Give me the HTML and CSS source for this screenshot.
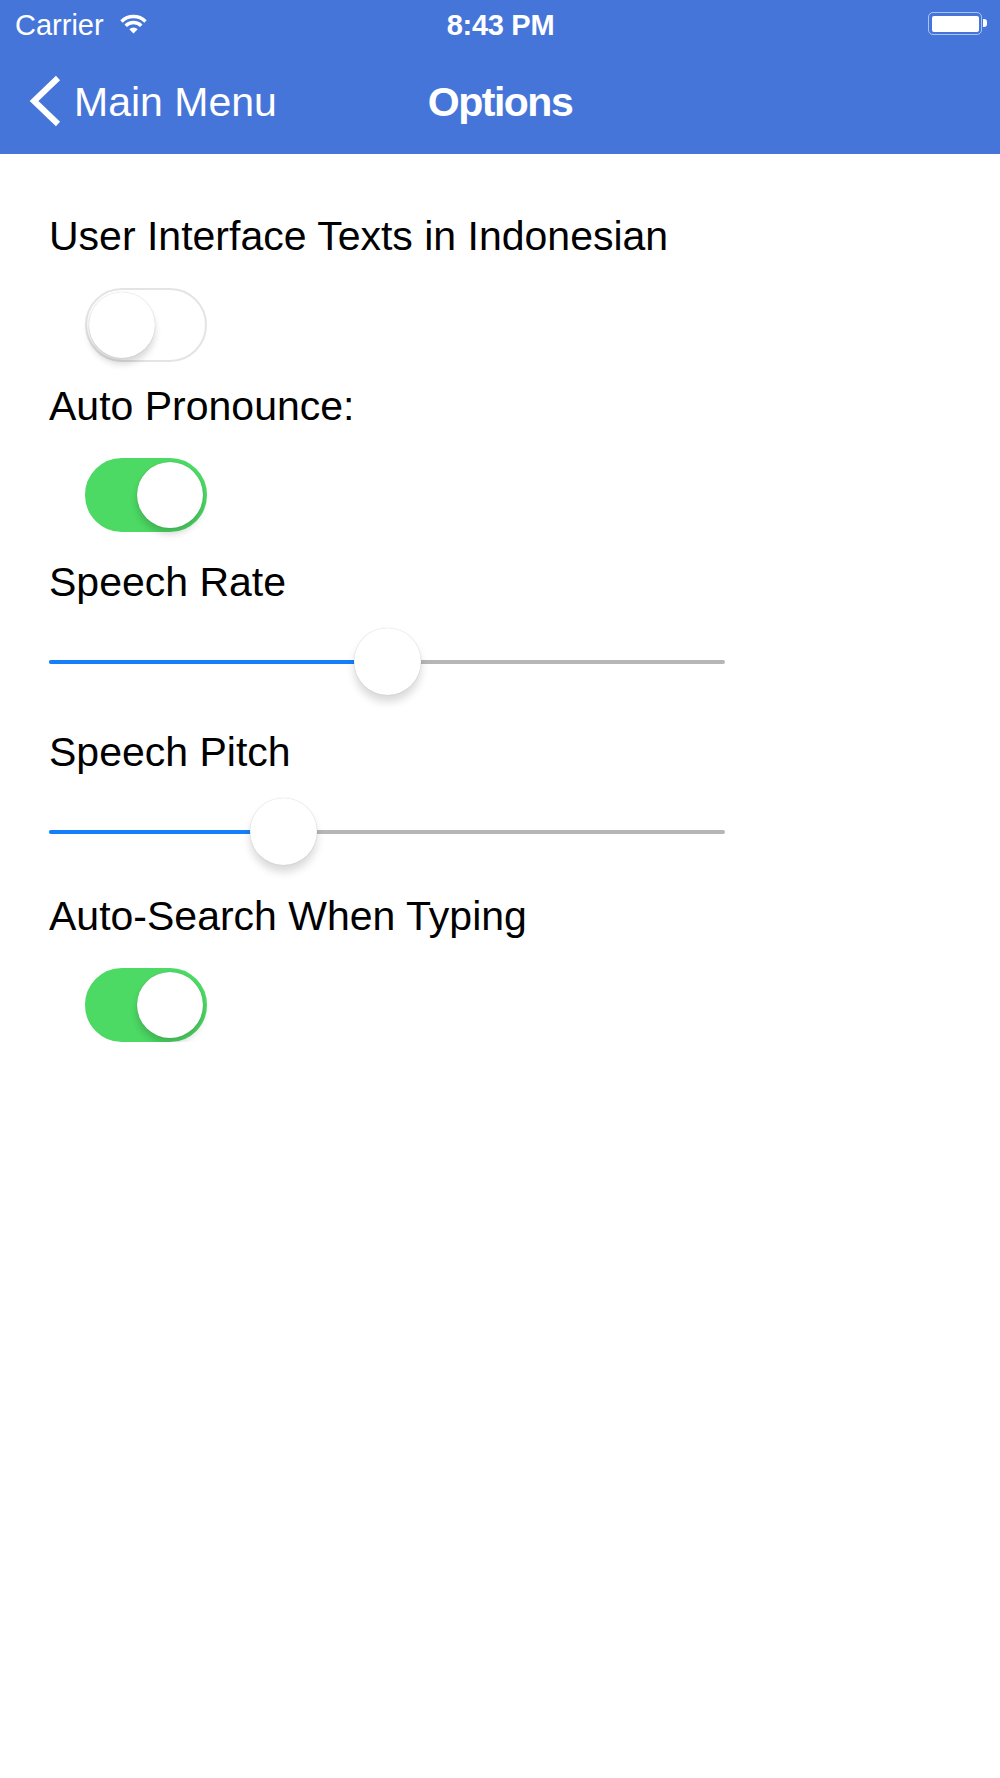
FILE: index.html
```html
<!DOCTYPE html>
<html lang="en">
<head>
    <meta charset="UTF-8">
    <meta name="viewport" content="width=device-width, initial-scale=1.0">
    <title>Options</title>
    <link rel="stylesheet" href="styles.css">
</head>
<body>
    <header class="topbar">
        <div class="status">
            <div class="status-left">
                <span>Carrier</span>
                <svg class="wifi" width="29" height="21" viewBox="0 0 29 21">
                    <path d="M2.5 8.5 A17 17 0 0 1 26.5 8.5" fill="none" stroke="#fff" stroke-width="3.4"/>
                    <path d="M6.7 12.7 A11 11 0 0 1 22.3 12.7" fill="none" stroke="#fff" stroke-width="3.4"/>
                    <path d="M14.5 20.5 L10.3 16.3 A6 6 0 0 1 18.7 16.3 Z" fill="#fff"/>
                </svg>
            </div>
            <div class="time">8:43 PM</div>
            <div class="status-right">
                <div class="battery"><div class="battery-fill"></div></div>
            </div>
        </div>
        <nav class="navbar">
            <div class="back">
                <svg class="chevron" width="34" height="52" viewBox="0 0 34 52">
                    <polyline points="30,3 6,26 30,49" fill="none" stroke="#fff" stroke-width="6"/>
                </svg>
                <span>Main Menu</span>
            </div>
            <div class="title">Options</div>
            <div></div>
        </nav>
    </header>

    <main class="options">
        <div class="label">User Interface Texts in Indonesian</div>
        <div class="switch"><div class="knob"></div></div>

        <div class="label label-after-switch">Auto Pronounce:</div>
        <div class="switch on"><div class="knob"></div></div>

        <div class="label label-before-slider">Speech Rate</div>
        <div class="slider">
            <div class="track"><div class="fill" style="width: 338px"></div></div>
            <div class="thumb" style="left: 305px"></div>
        </div>

        <div class="label label-after-slider">Speech Pitch</div>
        <div class="slider">
            <div class="track"><div class="fill" style="width: 235px"></div></div>
            <div class="thumb" style="left: 201px"></div>
        </div>

        <div class="label label-last">Auto-Search When Typing</div>
        <div class="switch on"><div class="knob"></div></div>
    </main>
</body>
</html>
```

FILE: styles.css
```css
body {
    margin: 0;
    background: #fff;
    font-family: "Liberation Sans", Arial, sans-serif;
    color: #000;
}

.topbar {
    background-color: #4675da;
    color: #fff;
}

.status {
    display: grid;
    grid-template-columns: 1fr auto 1fr;
    height: 48px;
    box-sizing: border-box;
    padding: 3px 14px 0 15px;
    font-size: 29px;
    line-height: 45px;
}

.status-left {
    display: flex;
    align-items: center;
}

.wifi {
    margin-left: 15px;
    margin-top: -5px;
}

.time {
    font-weight: bold;
    letter-spacing: -0.3px;
}

.status-right {
    display: flex;
    justify-content: flex-end;
    align-items: center;
}

.battery {
    position: relative;
    width: 54px;
    height: 23px;
    box-sizing: border-box;
    margin-top: -4px;
    margin-right: 4px;
    padding: 2.5px;
    border: 1.5px solid rgba(255, 255, 255, 0.55);
    border-radius: 5px;
}

.battery::after {
    content: "";
    position: absolute;
    right: -6px;
    top: 6px;
    width: 4px;
    height: 8px;
    background: #fff;
    border-radius: 0 3px 3px 0;
}

.battery-fill {
    height: 100%;
    background: #fff;
    border-radius: 2px;
}

.navbar {
    display: grid;
    grid-template-columns: 1fr auto 1fr;
    align-items: center;
    height: 106px;
    box-sizing: border-box;
    padding-top: 2px;
    font-size: 41px;
    line-height: 104px;
}

.back {
    display: flex;
    align-items: center;
    padding-left: 28px;
}

.chevron {
    margin-right: 12px;
    margin-top: -3px;
}

.title {
    font-weight: bold;
    letter-spacing: -1.5px;
}

.options {
    padding: 58px 0 0 49px;
}

.label {
    font-size: 41px;
    line-height: 49px;
}

.label-after-switch {
    margin-top: 20px;
}

.label-before-slider {
    margin-top: 26px;
}

.label-after-slider {
    margin-top: 33px;
}

.label-last {
    margin-top: 27px;
}

.switch {
    display: flex;
    justify-content: flex-start;
    align-items: center;
    width: 122px;
    height: 74px;
    box-sizing: border-box;
    margin: 27px 0 0 36px;
    padding: 0 2px;
    border: 2.5px solid #e4e4e4;
    border-radius: 37px;
    background: #fff;
}

.switch.on {
    justify-content: flex-end;
    border-color: #4cd964;
    background: #4cd964;
}

.knob {
    width: 66px;
    height: 66px;
    border-radius: 50%;
    background: #fff;
    box-shadow: 0 6px 7px rgba(0, 0, 0, 0.16), 0 0 1px rgba(0, 0, 0, 0.25);
}

.slider {
    position: relative;
    width: 676px;
    height: 67px;
    margin-top: 21px;
}

.track {
    position: absolute;
    left: 0;
    right: 0;
    top: 32px;
    height: 4px;
    border-radius: 2px;
    background: #b6b6b6;
}

.fill {
    height: 100%;
    border-radius: 2px;
    background: #147efb;
}

.thumb {
    position: absolute;
    top: 0;
    width: 67px;
    height: 67px;
    border-radius: 50%;
    background: #fff;
    box-shadow: 0 7px 8px rgba(0, 0, 0, 0.15), 0 0 1px rgba(0, 0, 0, 0.25);
}
```
